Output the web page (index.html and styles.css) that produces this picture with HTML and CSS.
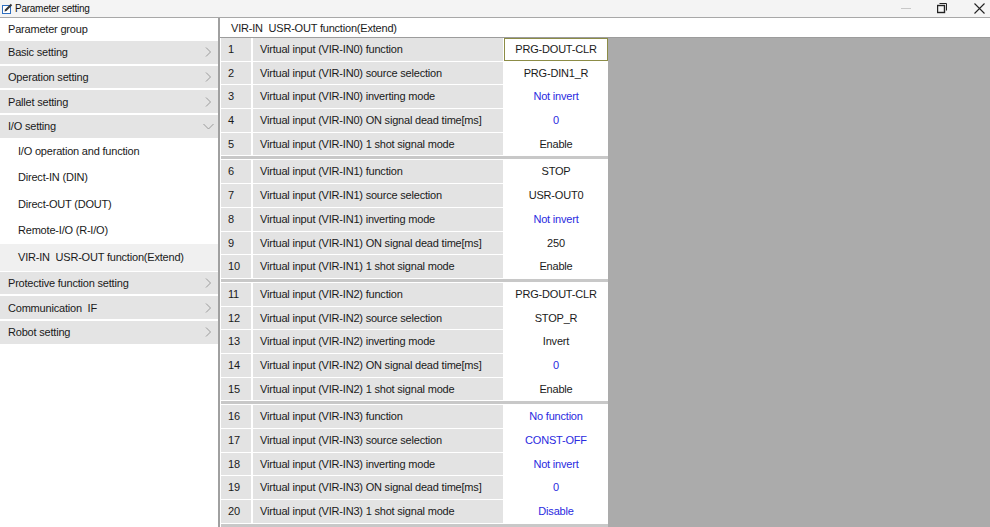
FILE: index.html
```html
<!DOCTYPE html>
<html lang="en">
<head>
  <meta charset="UTF-8">
  <title>Parameter setting</title>
  <link rel="stylesheet" href="styles.css">
</head>
<body>
  <div class="titlebar">
    <svg class="app-icon" width="11" height="11" viewBox="0 0 11 11">
      <rect x="0.5" y="2.5" width="8" height="8" fill="#fff" stroke="#2f6fc0"/>
      <path d="M2.5 8.5 L3 6.6 L8.8 0.8 L10.2 2.2 L4.4 8 Z" fill="#333"/>
    </svg>
    <span class="title">Parameter setting</span>
    <div class="controls">
      <svg class="ctl min" width="11" height="11" viewBox="0 0 11 11"><path d="M0 5.5 H10" stroke="#c8c8c8"/></svg>
      <svg class="ctl restore" width="11" height="11" viewBox="0 0 11 11">
        <path d="M2.5 0.5 H9.5 V7.5" fill="none" stroke="#222"/>
        <rect x="0.5" y="2.5" width="7" height="7" fill="none" stroke="#222" stroke-width="1.4"/>
      </svg>
      <svg class="ctl close" width="11" height="11" viewBox="0 0 11 11"><path d="M0.5 0.5 L10.5 10.5 M10.5 0.5 L0.5 10.5" stroke="#222" stroke-width="1.1"/></svg>
    </div>
  </div>

  <div class="main">
    <div class="sidebar">
      <div class="group-title">Parameter group</div>
      <div class="menu-item">Basic setting<svg class="chev" width="7" height="10" viewBox="0 0 7 10"><path d="M1 0.5 L5.5 5 L1 9.5" fill="none" stroke="#9a9a9a"/></svg></div>
      <div class="menu-item">Operation setting<svg class="chev" width="7" height="10" viewBox="0 0 7 10"><path d="M1 0.5 L5.5 5 L1 9.5" fill="none" stroke="#9a9a9a"/></svg></div>
      <div class="menu-item">Pallet setting<svg class="chev" width="7" height="10" viewBox="0 0 7 10"><path d="M1 0.5 L5.5 5 L1 9.5" fill="none" stroke="#9a9a9a"/></svg></div>
      <div class="menu-item">I/O setting<svg class="chev down" width="11" height="7" viewBox="0 0 11 7"><path d="M0.5 1 L5.5 6 L10.5 1" fill="none" stroke="#9a9a9a"/></svg></div>
      <div class="sub-list">
        <div class="sub-item">I/O operation and function</div>
        <div class="sub-item">Direct-IN (DIN)</div>
        <div class="sub-item">Direct-OUT (DOUT)</div>
        <div class="sub-item">Remote-I/O (R-I/O)</div>
        <div class="sub-item selected">VIR-IN&nbsp; USR-OUT function(Extend)</div>
      </div>
      <div class="menu-item after-sub">Protective function setting<svg class="chev" width="7" height="10" viewBox="0 0 7 10"><path d="M1 0.5 L5.5 5 L1 9.5" fill="none" stroke="#9a9a9a"/></svg></div>
      <div class="menu-item">Communication&nbsp; IF<svg class="chev" width="7" height="10" viewBox="0 0 7 10"><path d="M1 0.5 L5.5 5 L1 9.5" fill="none" stroke="#9a9a9a"/></svg></div>
      <div class="menu-item">Robot setting<svg class="chev" width="7" height="10" viewBox="0 0 7 10"><path d="M1 0.5 L5.5 5 L1 9.5" fill="none" stroke="#9a9a9a"/></svg></div>
    </div>

    <div class="content">
      <div class="content-title">VIR-IN&nbsp; USR-OUT function(Extend)</div>
      <div class="grid-area">
        <div class="table">
          <div class="group first">
            <div class="row"><div class="no">1</div><div class="name">Virtual input (VIR-IN0) function</div><div class="value active">PRG-DOUT-CLR</div></div>
            <div class="row"><div class="no">2</div><div class="name">Virtual input (VIR-IN0) source selection</div><div class="value">PRG-DIN1_R</div></div>
            <div class="row"><div class="no">3</div><div class="name">Virtual input (VIR-IN0) inverting mode</div><div class="value blue">Not invert</div></div>
            <div class="row"><div class="no">4</div><div class="name">Virtual input (VIR-IN0) ON signal dead time[ms]</div><div class="value blue">0</div></div>
            <div class="row"><div class="no">5</div><div class="name">Virtual input (VIR-IN0) 1 shot signal mode</div><div class="value">Enable</div></div>
          </div>
          <div class="group">
            <div class="row"><div class="no">6</div><div class="name">Virtual input (VIR-IN1) function</div><div class="value">STOP</div></div>
            <div class="row"><div class="no">7</div><div class="name">Virtual input (VIR-IN1) source selection</div><div class="value">USR-OUT0</div></div>
            <div class="row"><div class="no">8</div><div class="name">Virtual input (VIR-IN1) inverting mode</div><div class="value blue">Not invert</div></div>
            <div class="row"><div class="no">9</div><div class="name">Virtual input (VIR-IN1) ON signal dead time[ms]</div><div class="value">250</div></div>
            <div class="row"><div class="no">10</div><div class="name">Virtual input (VIR-IN1) 1 shot signal mode</div><div class="value">Enable</div></div>
          </div>
          <div class="group">
            <div class="row"><div class="no">11</div><div class="name">Virtual input (VIR-IN2) function</div><div class="value">PRG-DOUT-CLR</div></div>
            <div class="row"><div class="no">12</div><div class="name">Virtual input (VIR-IN2) source selection</div><div class="value">STOP_R</div></div>
            <div class="row"><div class="no">13</div><div class="name">Virtual input (VIR-IN2) inverting mode</div><div class="value">Invert</div></div>
            <div class="row"><div class="no">14</div><div class="name">Virtual input (VIR-IN2) ON signal dead time[ms]</div><div class="value blue">0</div></div>
            <div class="row"><div class="no">15</div><div class="name">Virtual input (VIR-IN2) 1 shot signal mode</div><div class="value">Enable</div></div>
          </div>
          <div class="group">
            <div class="row"><div class="no">16</div><div class="name">Virtual input (VIR-IN3) function</div><div class="value blue">No function</div></div>
            <div class="row"><div class="no">17</div><div class="name">Virtual input (VIR-IN3) source selection</div><div class="value blue">CONST-OFF</div></div>
            <div class="row"><div class="no">18</div><div class="name">Virtual input (VIR-IN3) inverting mode</div><div class="value blue">Not invert</div></div>
            <div class="row"><div class="no">19</div><div class="name">Virtual input (VIR-IN3) ON signal dead time[ms]</div><div class="value blue">0</div></div>
            <div class="row"><div class="no">20</div><div class="name">Virtual input (VIR-IN3) 1 shot signal mode</div><div class="value blue">Disable</div></div>
          </div>
          <div class="group"></div>
        </div>
      </div>
    </div>
  </div>
</body>
</html>
```

FILE: styles.css
```css
html, body {
  margin: 0;
  height: 100%;
  overflow: hidden;
}
body {
  font-family: "Liberation Sans", Arial, sans-serif;
  font-size: 11px;
  letter-spacing: -0.2px;
  color: #1a1a1a;
  background: #fff;
}
.titlebar {
  height: 17px;
  border-bottom: 1px solid #a8a8a8;
  background: #f4f4f4;
  display: flex;
  align-items: center;
  padding-left: 2px;
}
.app-icon {
  margin-right: 2px;
}
.title {
  font-size: 10px;
  letter-spacing: -0.25px;
  color: #111;
}
.controls {
  margin-left: auto;
  display: flex;
  align-items: center;
}
.ctl.min {
  margin-right: 25px;
}
.ctl.restore {
  margin-right: 26px;
}
.ctl.close {
  margin-right: 5px;
}
.main {
  display: flex;
  height: 509px;
}
.sidebar {
  width: 220px;
  box-sizing: border-box;
  border-right: 2px solid #a0a0a0;
  background: #fff;
}
.group-title {
  height: 21px;
  line-height: 22px;
  padding-left: 8px;
}
.menu-item {
  height: 22.67px;
  margin-top: 2px;
  background: #e4e4e4;
  display: flex;
  align-items: center;
  padding: 0 6px 0 8px;
}
.menu-item.after-sub {
  margin-top: 1px;
}
.chev {
  margin-left: auto;
}
.chev.down {
  margin-right: -2px;
}
.sub-item {
  height: 26.6px;
  line-height: 26.6px;
  padding-left: 18px;
}
.sub-item.selected {
  background: #f0f0f0;
}
.content {
  flex: 1;
  display: flex;
  flex-direction: column;
}
.content-title {
  height: 19px;
  line-height: 20px;
  padding-left: 11px;
}
.grid-area {
  flex: 1;
  background: #ababab;
  border-top: 1px solid #9c9c9c;
}
.table {
  width: 388px;
  height: 100%;
  background: #fff;
  box-sizing: border-box;
  padding-left: 1px;
}
.group {
  border-top: 3px solid #c8c8c8;
  padding-top: 1px;
}
.group.first {
  border-top: none;
  padding-top: 0;
}
.row {
  display: flex;
  height: 22.7px;
  line-height: 22.7px;
  margin-bottom: 1px;
}
.no {
  width: 30px;
  margin-right: 2px;
  padding-left: 7px;
  box-sizing: border-box;
  background: #e3e3e3;
}
.name {
  width: 250px;
  margin-right: 1px;
  padding-left: 7px;
  box-sizing: border-box;
  background: #e3e3e3;
}
.value {
  width: 104px;
  text-align: center;
  background: #fff;
}
.value.active {
  box-shadow: inset 0 0 0 1px #8c8c46;
}
.value.blue {
  color: #2a2ae0;
}
```
